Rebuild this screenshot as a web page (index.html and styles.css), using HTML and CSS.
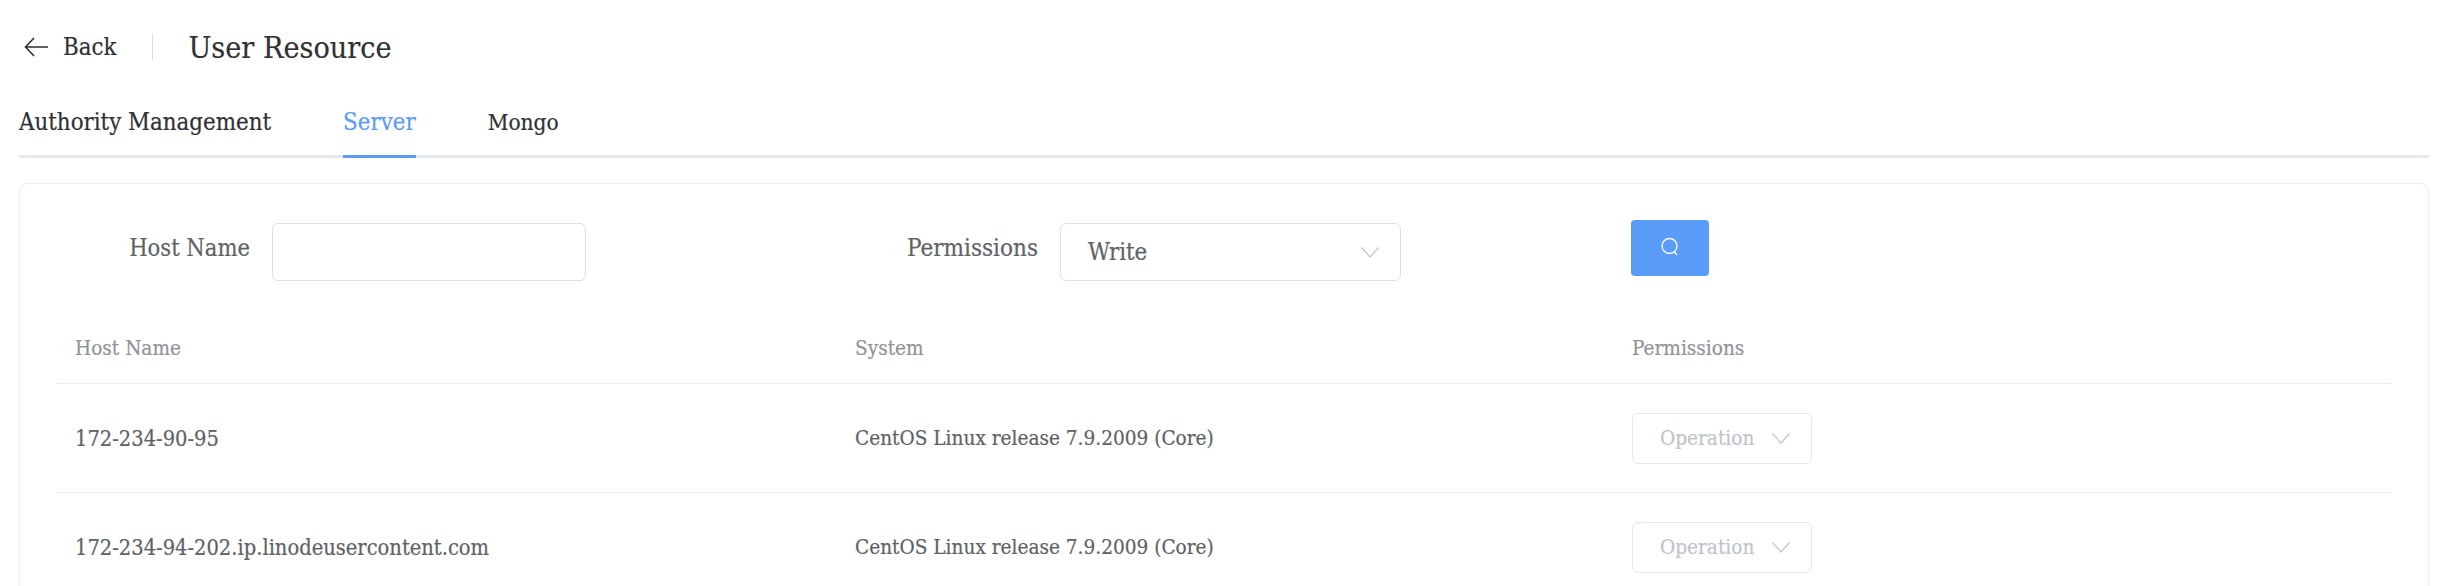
FILE: index.html
```html
<!DOCTYPE html>
<html lang="en">
<head>
    <meta charset="UTF-8">
    <title>User Resource</title>
    <link rel="stylesheet" href="styles.css">
</head>
<body>
    <header class="page-header">
        <a class="back">
            <svg class="back-icon" width="24" height="20" viewBox="0 0 24 20"><path d="M10 1 1.500 10 10 19M1.500 10H24" fill="none" stroke="#303133" stroke-width="1.600"/></svg>
            <span>Back</span>
        </a>
        <span class="divider"></span>
        <h1 class="title">User Resource</h1>
    </header>

    <nav class="tabs">
        <a class="tab">Authority Management</a>
        <a class="tab active">Server</a>
        <a class="tab mongo">Mongo</a>
    </nav>

    <section class="card">
        <form class="filters">
            <label class="filter-label host-label">Host Name</label>
            <div class="input"></div>
            <label class="filter-label perm-label">Permissions</label>
            <div class="input select">
                <span>Write</span>
                <svg width="18" height="11" viewBox="0 0 18 11"><path d="M.5.5 9 10 17.500.5" fill="none" stroke="#c0c4cc" stroke-width="1.200"/></svg>
            </div>
            <button type="button" class="search">
                <svg width="20" height="20" viewBox="0 0 20 20"><circle cx="9.500" cy="9" r="7.500" fill="none" stroke="#fff" stroke-width="1.300"/><path d="M14.500 15 17 18" stroke="#fff" stroke-width="1.300"/></svg>
            </button>
        </form>

        <div class="table">
            <div class="row head">
                <div>Host Name</div>
                <div>System</div>
                <div>Permissions</div>
            </div>
            <div class="row">
                <div class="host">172-234-90-95</div>
                <div>CentOS Linux release 7.9.2009 (Core)</div>
                <div>
                    <span class="operation">Operation
                        <svg width="18" height="11" viewBox="0 0 18 11"><path d="M.5.5 9 10 17.500.5" fill="none" stroke="#c0c4cc" stroke-width="1.200"/></svg>
                    </span>
                </div>
            </div>
            <div class="row">
                <div class="host">172-234-94-202.ip.linodeusercontent.com</div>
                <div>CentOS Linux release 7.9.2009 (Core)</div>
                <div>
                    <span class="operation">Operation
                        <svg width="18" height="11" viewBox="0 0 18 11"><path d="M.5.5 9 10 17.500.5" fill="none" stroke="#c0c4cc" stroke-width="1.200"/></svg>
                    </span>
                </div>
            </div>
        </div>
    </section>
</body>
</html>
```

FILE: styles.css
```css
html, body {
    height: 586px;
    overflow: hidden;
}

body {
    margin: 0;
    padding: 0 25px 0 19px;
    background-color: #fff;
    color: #303133;
    font-family: "DejaVu Serif", serif;
    font-stretch: condensed;
    -webkit-text-stroke: 0.2px;
}

.page-header {
    display: flex;
    align-items: center;
    height: 94px;
    padding-left: 5px;
}

.back {
    display: flex;
    align-items: center;
    gap: 15px;
    font-size: 23.800px;
}

.divider {
    width: 1px;
    height: 27px;
    margin: 0 35px 0 36px;
    background-color: #dcdfe6;
}

.title {
    margin: 0;
    font-size: 30.200px;
    font-weight: normal;
}

.tabs {
    display: flex;
    gap: 72px;
    height: 61px;
    border-bottom: 3px solid #e4e7ed;
}

.tab {
    height: 61px;
    line-height: 56px;
    font-size: 23.800px;
}

.tab.mongo {
    font-size: 22.500px;
}

.tab.active {
    color: #5a9cf8;
    border-bottom: 3px solid #5a9cf8;
}

.card {
    box-sizing: border-box;
    margin-top: 25px;
    height: 420px;
    padding: 36px 36px 0;
    border: 1px solid #ebeef5;
    border-radius: 8px;
}

.filters {
    display: flex;
    align-items: flex-start;
    height: 93px;
}

.filter-label {
    flex: none;
    margin-top: 5px;
    margin-right: 22px;
    line-height: 46px;
    font-size: 24px;
    text-align: right;
    color: #606266;
}

.host-label {
    width: 194px;
    font-size: 23.500px;
}

.perm-label {
    width: 452px;
}

.input {
    box-sizing: border-box;
    width: 314px;
    height: 58px;
    margin-top: 3px;
    border: 1px solid #dcdfe6;
    border-radius: 6px;
}

.select {
    display: flex;
    align-items: center;
    justify-content: space-between;
    width: 341px;
    padding: 0 21px 0 27px;
    font-size: 23.800px;
    color: #606266;
}

.search {
    width: 78px;
    height: 56px;
    margin-left: 230px;
    border: none;
    border-radius: 4px;
    background-color: #5a9cf8;
}

.row {
    display: grid;
    grid-template-columns: 780px 777px 1fr;
    align-items: center;
    height: 108px;
    padding-left: 19px;
    border-bottom: 1px solid #ebeef5;
    font-size: 20.600px;
    color: #606266;
}

.row.head {
    height: 70px;
    color: #909399;
}

.row .host {
    font-size: 21.700px;
}

.operation {
    box-sizing: border-box;
    display: inline-flex;
    align-items: center;
    justify-content: space-between;
    width: 180px;
    height: 51px;
    padding: 0 21px 0 27px;
    border: 1px solid #e4e7ed;
    border-radius: 6px;
    color: #c0c4cc;
}
```
